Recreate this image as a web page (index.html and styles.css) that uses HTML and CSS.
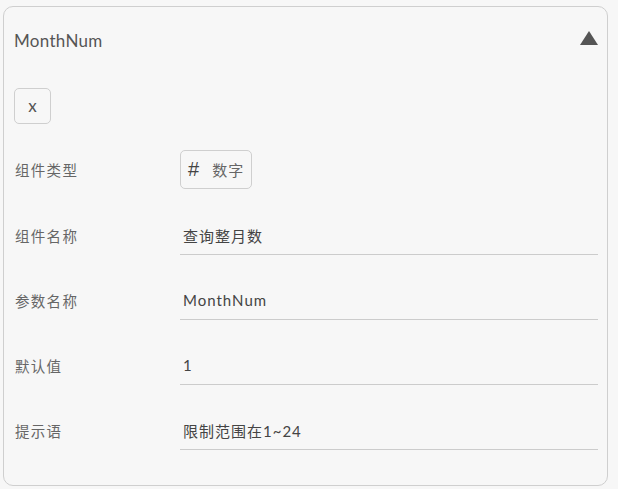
FILE: index.html
```html
<!DOCTYPE html>
<html lang="zh">
<head>
<meta charset="utf-8">
<link rel="stylesheet" href="styles.css">
</head>
<body>
<div class="card">
  <div class="header">
    <span class="title">MonthNum</span>
    <svg class="caret" width="18" height="14" viewBox="0 0 18 14"><polygon points="9,0 18,14 0,14" fill="#555"/></svg>
  </div>
  <button class="close">x</button>
  <div class="form">
    <div class="row first">
      <div class="label">组件类型</div>
      <div class="chip"><span class="hash">#</span><span>数字</span></div>
    </div>
    <div class="row">
      <div class="label">组件名称</div>
      <div class="field">查询整月数</div>
    </div>
    <div class="row">
      <div class="label">参数名称</div>
      <div class="field">MonthNum</div>
    </div>
    <div class="row">
      <div class="label">默认值</div>
      <div class="field">1</div>
    </div>
    <div class="row">
      <div class="label">提示语</div>
      <div class="field">限制范围在1~24</div>
    </div>
  </div>
</div>
</body>
</html>
```
FILE: styles.css
```css
html, body {
  background: #f7f7f7;
}
body {
  margin: 0;
  padding: 6px 10px 3px 3px;
  font-family: "Lato", "Noto Sans CJK SC", sans-serif;
  color: #555;
}
.card {
  border: 1px solid #cfcfcf;
  border-radius: 10px;
  background: #f7f7f7;
  padding: 0 9px 35px 10px;
  box-sizing: border-box;
  height: 480px;
}
.header {
  height: 66px;
  display: flex;
  align-items: center;
  justify-content: space-between;
}
.title {
  font-size: 17px;
  color: #555;
  letter-spacing: 0.3px;
}
.caret {
  display: block;
  margin-top: -4px;
}
.close {
  display: block;
  margin-top: 15px;
  width: 37px;
  height: 36px;
  border: 1px solid #cfcfcf;
  border-radius: 5px;
  background: #f7f7f7;
  font-family: "Lato", sans-serif;
  font-size: 17px;
  line-height: 1;
  color: #555;
  padding: 0 0 2px 0;
}
.form {
  margin-top: 26px;
  display: flex;
  flex-direction: column;
  gap: 28px;
}
.row {
  display: grid;
  grid-template-columns: 166px 1fr;
  align-items: center;
}
.row.first {
  margin-bottom: 1px;
}
.label {
  font-size: 14.5px;
  letter-spacing: 1.3px;
  color: #666;
  padding: 0 0 3px 1px;
}
.row.first .label {
  padding-bottom: 0;
}
.chip {
  justify-self: start;
  box-sizing: border-box;
  height: 39px;
  width: 72px;
  border: 1px solid #cfcfcf;
  border-radius: 5px;
  display: flex;
  align-items: center;
  gap: 13px;
  padding-left: 7px;
  font-size: 15px;
  letter-spacing: 1px;
  color: #666;
}
.hash {
  font-family: "Liberation Sans", sans-serif;
  font-size: 20px;
  font-weight: 400;
  color: #444;
  letter-spacing: 0;
}
.field {
  box-sizing: border-box;
  height: 37px;
  border-bottom: 1px solid #cccccc;
  display: flex;
  align-items: center;
  padding: 0 0 2px 3px;
  font-size: 15px;
  letter-spacing: 1px;
  color: #444;
}
```
